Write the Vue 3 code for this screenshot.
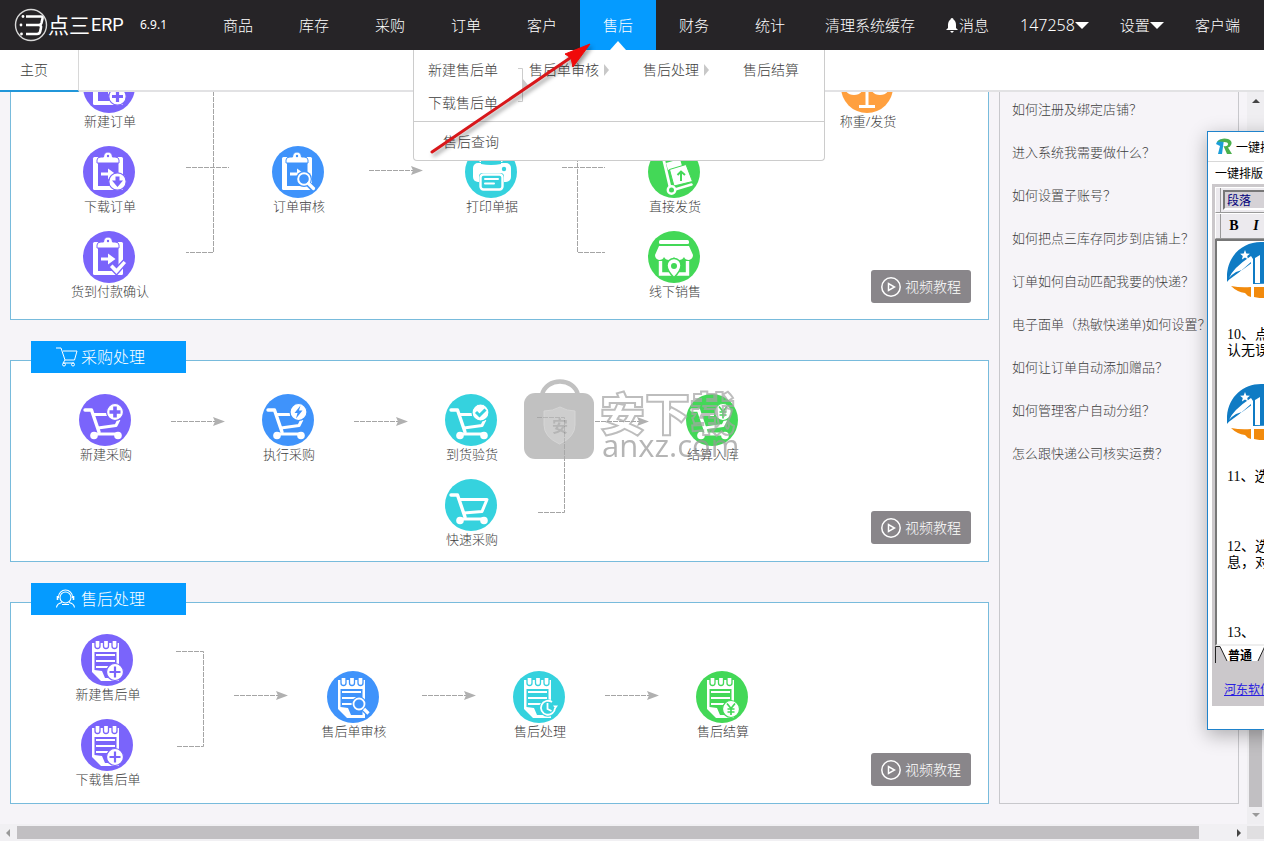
<script setup>
const mainNav = ['商品', '库存', '采购', '订单', '客户', '售后', '财务', '统计']
const active = '售后'

const panels = [
  {
    id: 'order',
    title: '',
    nodes: [
      { x: 98, y: 40, color: 'purple', icon: 'board', badge: 'plus', label: '新建订单' },
      { x: 98, y: 125, color: 'purple', icon: 'board', badge: 'down', label: '下载订单' },
      { x: 98, y: 210, color: 'purple', icon: 'board', badge: 'tick', label: '货到付款确认' },
      { x: 287, y: 125, color: 'blue', icon: 'board', badge: 'lens', label: '订单审核' },
      { x: 480, y: 125, color: 'cyan', icon: 'printer', label: '打印单据' },
      { x: 663, y: 125, color: 'green', icon: 'trolley', label: '直接发货' },
      { x: 663, y: 210, color: 'green', icon: 'store', label: '线下销售' },
      { x: 856, y: 40, color: 'orange', icon: 'scale', label: '称重/发货' }
    ],
    lines: ['M175 146.5H218', 'M202.5 70V231.5H175', 'M551 146.5H594', 'M566.5 70V231.5H594'],
    arrows: [[358, 149]]
  },
  {
    id: 'purchase',
    title: '采购处理',
    tagIcon: 'tag-cart',
    nodes: [
      { x: 94, y: 33, color: 'purple', icon: 'cart', badge: 'cart-plus', label: '新建采购' },
      { x: 277, y: 33, color: 'blue', icon: 'cart', badge: 'cart-bolt', label: '执行采购' },
      { x: 460, y: 33, color: 'cyan', icon: 'cart', badge: 'cart-ok', label: '到货验货' },
      { x: 460, y: 118, color: 'cyan', icon: 'cart-full', label: '快速采购' },
      { x: 701, y: 33, color: 'green', icon: 'cart', badge: 'cart-yen', label: '结算入库' }
    ],
    lines: ['M526 56.5H553.5V151.5H526'],
    arrows: [[160, 60], [343, 60], [584, 60]]
  },
  {
    id: 'service',
    title: '售后处理',
    tagIcon: 'tag-agent',
    nodes: [
      { x: 96, y: 31, color: 'purple', icon: 'note', badge: 'note-plus', label: '新建售后单' },
      { x: 96, y: 116, color: 'purple', icon: 'note', badge: 'note-plus', label: '下载售后单' },
      { x: 342, y: 68, color: 'blue', icon: 'note', badge: 'note-lens', label: '售后单审核' },
      { x: 528, y: 68, color: 'cyan', icon: 'note', badge: 'note-clock', label: '售后处理' },
      { x: 711, y: 68, color: 'green', icon: 'note', badge: 'note-yen', label: '售后结算' }
    ],
    lines: ['M165 48.5H192.5V143.5H165'],
    arrows: [[223, 92], [411, 92], [594, 92]]
  }
]

const help = [
  '如何注册及绑定店铺？',
  '进入系统我需要做什么？',
  '如何设置子账号？',
  '如何把点三库存同步到店铺上？',
  '订单如何自动匹配我要的快递？',
  '电子面单（热敏快递单)如何设置？',
  '如何让订单自动添加赠品？',
  '如何管理客户自动分组？',
  '怎么跟快递公司核实运费？'
]
</script>

<template>
  <div class="page">
    <svg class="defs" aria-hidden="true">
      <symbol id="board" viewBox="0 0 52 52">
        <rect x="10" y="11" width="30" height="33" rx="1.500" fill="#fff" />
        <rect x="15" y="15" width="20.500" height="25" fill="currentColor" />
        <path d="M14 17v-3q0-3 4-3h2.500q.5-5 4.500-5t4.500 5H32q4 0 4 3v3z" fill="#fff" stroke="currentColor" stroke-width="1" />
        <circle cx="25" cy="10" r="1.200" fill="currentColor" />
        <path d="M18 26.500h7v-4l7.500 5.500-7.500 5.500v-4h-7z" fill="#fff" />
      </symbol>
      <symbol id="plus" viewBox="0 0 52 52">
        <circle cx="34.500" cy="35.500" r="8.700" fill="#fff" stroke="currentColor" stroke-width="1.200" />
        <path d="M34.500 30v11M29 35.500h11" stroke="currentColor" stroke-width="3.200" />
      </symbol>
      <symbol id="down" viewBox="0 0 52 52">
        <circle cx="34.500" cy="35.500" r="8.700" fill="#fff" stroke="currentColor" stroke-width="1.200" />
        <path d="M32.500 30.500h4v4h3.500l-5.500 6.500-5.500-6.500h3.500z" fill="currentColor" />
      </symbol>
      <symbol id="tick" viewBox="0 0 52 52">
        <path d="M26 36l3.500-3.500 4 4 7-7.500 3.500 3-10.500 12z" fill="#fff" stroke="currentColor" stroke-width="1.300" />
      </symbol>
      <symbol id="lens" viewBox="0 0 52 52">
        <circle cx="32" cy="33" r="8" fill="currentColor" />
        <path d="M37 38.500l5 5" stroke="currentColor" stroke-width="6" />
        <circle cx="32" cy="33" r="5.800" fill="currentColor" stroke="#fff" stroke-width="2" />
        <path d="M36.500 37.500l5 5" stroke="#fff" stroke-width="3.200" stroke-linecap="round" />
      </symbol>
      <symbol id="printer" viewBox="0 0 52 52">
        <path d="M16 16V8h20v8" fill="none" stroke="#fff" stroke-width="3" />
        <rect x="8" y="17" width="38" height="19" rx="5" fill="#fff" />
        <path d="M16 15h20v3q-10 2-20 0z" fill="currentColor" />
        <rect x="14" y="27" width="25" height="18" rx="3.500" fill="currentColor" />
        <rect x="15.500" y="28.500" width="22" height="15" rx="3" fill="none" stroke="#fff" stroke-width="2.400" />
        <path d="M20 33h13M20 37.500h9" stroke="#fff" stroke-width="2" stroke-linecap="round" />
        <circle cx="39" cy="23" r="2.200" fill="currentColor" />
      </symbol>
      <symbol id="trolley" viewBox="0 0 52 52">
        <path d="M11 9l4 2 7 30" fill="none" stroke="#fff" stroke-width="2.800" stroke-linecap="round" />
        <path d="M18 17l14-4 2 7-14 4z" fill="#fff" />
        <path d="M21.500 23.500L38 18.500l6.500 17L26 40z" fill="#fff" stroke="currentColor" stroke-width="1" />
        <path d="M33 35v-9M29.500 29l3.500-3.500 4 3.500" fill="none" stroke="currentColor" stroke-width="2" />
        <path d="M27 43.500l16.500-5" stroke="#fff" stroke-width="2.400" stroke-linecap="round" />
        <circle cx="23.500" cy="44" r="3.700" fill="currentColor" stroke="#fff" stroke-width="2.400" />
      </symbol>
      <symbol id="store" viewBox="0 0 52 52">
        <rect x="11" y="9" width="30" height="4" rx="1.500" fill="#fff" />
        <path d="M11 15h30l4 9q0 4-4 5-4 0-5-3-1.500 3-5 3t-5-3q-1.500 3-5 3t-5-3q-1 3-5 3-4-1-4-5z" fill="#fff" />
        <path d="M12.500 30v13h27V30" fill="none" stroke="#fff" stroke-width="3.400" />
        <path d="M26 46.500q-7-7-7-12a7 7 0 0 1 14 0q0 5-7 12z" fill="#fff" stroke="currentColor" stroke-width="1.500" />
        <circle cx="26" cy="35" r="3" fill="currentColor" />
      </symbol>
      <symbol id="scale" viewBox="0 0 52 52">
        <path d="M26 9v36M18 45.500h16M10 14h32" fill="none" stroke="#fff" stroke-width="3" />
        <path d="M4 28h18q-2 6-9 6t-9-6zM30 28h18q-2 6-9 6t-9-6z" fill="#fff" />
      </symbol>
      <symbol id="cart" viewBox="0 0 52 52">
        <path d="M6 16h6.500L20 38" fill="none" stroke="#fff" stroke-width="3.400" stroke-linecap="round" stroke-linejoin="round" />
        <path d="M15 20.500h13M19 34l18-2.500 3-6" fill="none" stroke="#fff" stroke-width="3" stroke-linejoin="round" />
        <path d="M14 40h26" stroke="#fff" stroke-width="3" />
        <circle cx="15" cy="41.500" r="3.800" fill="#fff" />
        <circle cx="39" cy="41.500" r="3.800" fill="#fff" />
      </symbol>
      <symbol id="cart-full" viewBox="0 0 52 52">
        <path d="M6 16h6.500L20 38" fill="none" stroke="#fff" stroke-width="3.400" stroke-linecap="round" stroke-linejoin="round" />
        <path d="M15 20.500h27L37 32.500 19 34" fill="none" stroke="#fff" stroke-width="3" stroke-linejoin="round" />
        <path d="M14 40h26" stroke="#fff" stroke-width="3" />
        <circle cx="15" cy="41.500" r="3.800" fill="#fff" />
        <circle cx="39" cy="41.500" r="3.800" fill="#fff" />
      </symbol>
      <symbol id="cart-plus" viewBox="0 0 52 52">
        <circle cx="36" cy="18" r="8.500" fill="#fff" stroke="currentColor" stroke-width="1.200" />
        <path d="M36 12.500v11M30.500 18h11" stroke="currentColor" stroke-width="3.600" />
      </symbol>
      <symbol id="cart-bolt" viewBox="0 0 52 52">
        <circle cx="36.500" cy="18" r="8.500" fill="#fff" stroke="currentColor" stroke-width="1.200" />
        <path d="M38.500 11.500l-6 7.500h3l-1.500 5.500 6.500-8h-3.500z" fill="currentColor" />
      </symbol>
      <symbol id="cart-ok" viewBox="0 0 52 52">
        <circle cx="35.500" cy="18.500" r="8.500" fill="#fff" stroke="currentColor" stroke-width="1.200" />
        <path d="M31 18l3.500 3.500 6-6" fill="none" stroke="currentColor" stroke-width="3" />
      </symbol>
      <symbol id="cart-yen" viewBox="0 0 52 52">
        <circle cx="37" cy="18" r="8.500" fill="#fff" stroke="currentColor" stroke-width="1.200" />
        <path d="M33 12.500l4 5 4-5M37 17.500v7M33.500 18h7M33.500 21h7" fill="none" stroke="currentColor" stroke-width="1.600" />
      </symbol>
      <symbol id="note" viewBox="0 0 52 52">
        <path d="M11 9h27v38H20L11 38z" fill="#fff" />
        <path d="M13.500 18h22v26H24l-3-7-7.500-1z" fill="currentColor" />
        <path d="M15 21h19M15 27h19M15 33h19" stroke="#fff" stroke-width="2.200" />
        <path d="M14 7v5q0 2.500 2.500 2.500T19 12V7M22.500 7v5q0 2.500 2.500 2.500t2.500-2.500V7M31 7v5q0 2.500 2.500 2.500T36 12V7" fill="#fff" stroke="currentColor" stroke-width="1.300" />
      </symbol>
      <symbol id="note-plus" viewBox="0 0 52 52">
        <circle cx="34" cy="38" r="8.500" fill="#fff" stroke="currentColor" stroke-width="1.200" />
        <path d="M34 32.500v11M28.500 38h11" stroke="currentColor" stroke-width="2.200" />
      </symbol>
      <symbol id="note-lens" viewBox="0 0 52 52">
        <circle cx="32" cy="33" r="7.500" fill="currentColor" />
        <path d="M36 37l6 6" stroke="currentColor" stroke-width="6" />
        <circle cx="32" cy="33" r="5.500" fill="currentColor" stroke="#fff" stroke-width="1.800" />
        <path d="M37 38l4.500 4.500" stroke="#fff" stroke-width="3.200" />
      </symbol>
      <symbol id="note-clock" viewBox="0 0 52 52">
        <circle cx="35" cy="37" r="8.800" fill="currentColor" />
        <path d="M42 37a7 7 0 1 1-3-6" fill="none" stroke="#fff" stroke-width="1.800" />
        <path d="M40 34.500h5L42.500 38z" fill="#fff" />
        <path d="M34.500 32v6l4 2" fill="none" stroke="#fff" stroke-width="1.800" />
      </symbol>
      <symbol id="note-yen" viewBox="0 0 52 52">
        <circle cx="35" cy="38" r="8.500" fill="#fff" stroke="currentColor" stroke-width="1.200" />
        <path d="M31 32.500l4 5 4-5M35 37.500v6.500M31.500 38h7M31.500 41h7" fill="none" stroke="currentColor" stroke-width="1.700" />
      </symbol>
      <symbol id="tag-cart" viewBox="0 0 24 24">
        <path d="M0 3h5l4 12h9.500L21 6H7M9 15l-2 3h11" fill="none" stroke="#fff" stroke-width="1" />
        <circle cx="8" cy="19.500" r="1.500" fill="none" stroke="#fff" />
        <circle cx="17" cy="19.500" r="1.500" fill="none" stroke="#fff" />
      </symbol>
      <symbol id="tag-agent" viewBox="0 0 24 24">
        <circle cx="9.500" cy="10.500" r="5.500" fill="none" stroke="#fff" stroke-width="1.100" />
        <path d="M2.500 11V10a7 7 0 0 1 14 0v1" fill="none" stroke="#fff" stroke-width="1.100" />
        <path d="M1.500 9v4M17.500 9v4" stroke="#fff" stroke-width="1.600" />
        <path d="M.5 20.500q.5-4 5.500-5M13 15.500q5 1 5.500 5M6 17.500h7" fill="none" stroke="#fff" stroke-width="1.100" />
      </symbol>
      <symbol id="brand" viewBox="0 0 64 56">
        <path d="M0 40C-2 16 14 0 34 0q30 0 30 26v15L26 42V20L7 34q-6 4-7 6z" fill="#0f7bc4" />
        <path d="M2 36Q6 26 24 14l2 3v22h-2V20l-9 8v10h9v3q-14 1-17-3 0-3 8-10L9 30q-5 3-7 6z" fill="#fff" />
        <path d="M18 8l1.300 3.400 3.600.3-2.700 2.300.9 3.500-3.100-1.900-3.100 1.900.9-3.500-2.700-2.300 3.600-.3z" fill="#fff" />
        <path d="M30 15h14v26H30z" fill="#0f7bc4" />
        <path d="M28 16l5-3v28h-5z" fill="#fff" />
        <path d="M4 44q10 2 20 1v10q-4-1-6-4-8-1-14-7zM27 45h17v11q-9 1-17-1zM48 44l13-2q-4 8-13 12z" fill="#f28a0c" />
      </symbol>
    </svg>

    <header class="top">
      <a class="logo" href="#" aria-label="点三ERP">
        <svg width="34" height="34" viewBox="0 0 34 34">
          <circle cx="17" cy="17" r="15.500" fill="none" stroke="#d8d8d8" stroke-width="1.400" />
          <path d="M12 8.500h15q2 0 1.500 2L27.500 15q-.5 2-3 2H12M25 17q2.500.5 2 2.500l-.8 4Q25.700 26 23 26H12" fill="none" stroke="#fff" stroke-width="2.600" />
          <circle cx="9" cy="8.500" r="1.400" fill="#fff" />
          <circle cx="7" cy="17" r="1.400" fill="#fff" />
          <circle cx="7.500" cy="26" r="1.400" fill="#fff" />
        </svg>
        <span class="brand-cn">点三</span><span class="brand-en">ERP</span>
      </a>
      <span class="version">6.9.1</span>
      <nav class="nav">
        <div v-for="item in mainNav" :key="item" class="cell" :class="{ on: item === active }">
          <a href="#">{{ item }}</a>
          <div v-if="item === active" class="menu">
            <div class="flow">
              <div class="col">
                <a href="#">新建售后单</a>
                <a href="#">下载售后单</a>
              </div>
              <svg class="join" width="10" height="34" viewBox="0 0 10 34">
                <path d="M0 .5H4.500V33.500H0" fill="none" stroke="#ccc" />
                <path d="M5 11l5 6-5 6z" fill="#ccc" />
              </svg>
              <a href="#" class="step">售后单审核</a>
              <i class="tri"></i>
              <a href="#" class="step mid">售后处理</a>
              <i class="tri"></i>
              <a href="#" class="step mid">售后结算</a>
            </div>
            <div class="query"><a href="#">售后查询</a></div>
          </div>
        </div>
      </nav>
      <nav class="tools">
        <a href="#">清理系统缓存</a>
        <a href="#">
          <svg class="bell" width="12" height="15" viewBox="0 0 12 15"><path d="M6 0q1.500 0 1.500 1.500Q10 3 10 7v3l2 2H0l2-2V7q0-4 2.500-5.500Q4.500 0 6 0zM4 13h4l-2 2z" fill="#fff" /></svg>
          <span>消息</span>
        </a>
        <a href="#"><span class="num">147258</span><i class="caret"></i></a>
        <a href="#"><span>设置</span><i class="caret"></i></a>
        <a href="#">客户端</a>
      </nav>
    </header>

    <div class="tabs"><button type="button" class="tab">主页</button></div>

    <div class="body">
      <main class="panels">
        <section v-for="p in panels" :key="p.id" class="panel" :class="p.id">
          <h2 v-if="p.title" class="tag">
            <svg width="24" height="24"><use :href="'#' + p.tagIcon" /></svg>
            <span>{{ p.title }}</span>
          </h2>
          <svg class="links" aria-hidden="true">
            <path v-for="d in p.lines" :key="d" :d="d" fill="none" stroke="#a5a5a5" stroke-dasharray="5 1" />
            <g v-for="(a, i) in p.arrows" :key="i" :transform="`translate(${a[0]} ${a[1]})`">
              <path d="M0 .5H44" fill="none" stroke="#a5a5a5" stroke-dasharray="5 1" />
              <path d="M42-4L54 .5 42 5l2-4.500z" fill="#b0b0b0" />
            </g>
          </svg>
          <a v-for="(n, i) in p.nodes" :key="i" href="#" class="node" :style="{ left: n.x + 'px', top: n.y + 'px' }">
            <svg width="52" height="52" viewBox="0 0 52 52" :class="n.color">
              <circle cx="26" cy="26" r="26" fill="currentColor" />
              <use :href="'#' + n.icon" />
              <use v-if="n.badge" :href="'#' + n.badge" />
            </svg>
            <span>{{ n.label }}</span>
          </a>
          <div v-if="p.id === 'purchase'" class="mark">
            <svg width="70" height="80" viewBox="0 0 70 80">
              <path d="M18 16C22-2 50-2 54 16" fill="none" stroke="#aaa" stroke-width="4.500" />
              <rect y="14" width="70" height="66" rx="11" fill="#aaa" />
              <path d="M20 32q9 0 16-4 7 4 15 4v14q0 12-15.500 19Q20 58 20 46z" fill="#bcbcbc" stroke="#c6c6c6" />
            </svg>
            <span class="seal">安</span>
            <div class="words"><span class="cn">安下载</span><span class="en">anxz.com</span></div>
          </div>
          <button type="button" class="video">
            <svg width="20" height="20" viewBox="0 0 20 20" fill="none" stroke="#fff" stroke-width="1.500">
              <circle cx="10" cy="10" r="9.200" /><path d="M7.500 6.500v7l6-3.500z" />
            </svg>
            <span>视频教程</span>
          </button>
        </section>
      </main>
      <aside class="help">
        <ul>
          <li v-for="h in help" :key="h"><a href="#">{{ h }}</a></li>
        </ul>
      </aside>
      <div class="vbar"><i class="up"></i><div class="vthumb"></div><i class="dn"></i></div>
    </div>
    <div class="hbar"><i class="lt"></i><div class="htrack"><div class="hthumb"></div></div><i class="rt"></i><div class="corner"></div></div>

    <svg class="pointer" width="176" height="124" viewBox="0 0 176 124" aria-hidden="true">
      <path d="M8 115L149 19" stroke="#d8171a" stroke-width="3" stroke-linecap="round" />
      <path d="M166 7L141 17l6 4 2 9z" fill="#f00a0a" stroke="#f00a0a" />
    </svg>

    <div class="win">
      <div class="title">
        <svg width="18" height="17" viewBox="0 0 18 17">
          <path d="M1 6Q3 0 9 1.500L7 16H3l2-8z" fill="#1b9ed8" />
          <path d="M2 4Q7-1 13 1q5 2 3 6-1 2-3 2.500L17 16h-5L8.500 8q4 1 4.500-1.500T9 4Q5 3 2 4z" fill="#4bb04c" />
        </svg>
        <span>一键排版</span>
      </div>
      <div class="bar">一键排版</div>
      <div class="frame">
        <div class="tool"><div class="combo">段落</div></div>
        <div class="tool"><button type="button" class="fmt">B</button><button type="button" class="fmt it">I</button></div>
        <div class="doc">
          <svg width="64" height="56"><use href="#brand" /></svg>
          <p class="a">10、点<br />认无误</p>
          <svg width="64" height="56"><use href="#brand" /></svg>
          <p class="b">11、选</p>
          <p class="c">12、选<br />息，对</p>
          <p class="c">13、</p>
        </div>
        <div class="sheet">
          <svg width="60" height="17" viewBox="0 0 60 17"><path d="M5 0l7 15h31L50 0z" fill="#fff" /><path d="M.5 17V.5H5L12 15M43 15L50 0" fill="none" stroke="#222" /></svg>
          <b>普通</b>
        </div>
        <a class="link" href="#">河东软件</a>
      </div>
    </div>
  </div>
</template>

<style>
body { margin: 0; background: #f6f4f8; }
</style>

<style scoped>
* { box-sizing: border-box; }
.page { position: relative; display: flex; flex-direction: column; height: 100vh; overflow: hidden; background: #f6f4f8; color: #3c3c3c; font: 300 13px/16px "Noto Sans", "Noto Sans CJK SC", sans-serif; }
a { color: inherit; text-decoration: none; }
button { font: inherit; color: inherit; border: 0; background: none; padding: 0; }
.defs { position: absolute; width: 0; height: 0; }

.top { position: relative; z-index: 5; flex: none; display: flex; align-items: center; height: 50px; background: #262427; color: #fff; font-size: 15px; line-height: 50px; white-space: nowrap; }
.logo { display: flex; align-items: center; width: 126px; margin-left: 14px; }
.logo svg { flex: none; }
.brand-cn { font-size: 21px; font-weight: 400; }
.brand-en { margin-left: 1px; font: 400 18px/46px Roboto, sans-serif; }
.version { width: 60px; font-size: 12px; font-weight: 400; line-height: 48px; }
.nav { display: flex; }
.cell { position: relative; width: 76px; height: 50px; text-align: center; }
.cell > a { display: block; }
.cell.on { background: #059bff; }
.cell.on::after { content: ""; position: absolute; left: 30px; bottom: 0; border: 8px solid transparent; border-top: 0; border-bottom: 9px solid #fff; }
.tools { display: flex; gap: 31px; margin-left: 17px; }
.tools a { display: flex; align-items: center; height: 50px; }
.bell { margin-right: 1px; }
.num { font-size: 16px; }
.caret { border: 7px solid transparent; border-bottom: 0; border-top-color: #fff; }

.menu { position: absolute; left: -167px; top: 50px; width: 412px; border: 1px solid #ccc; border-top: 0; border-radius: 0 0 4px 4px; background: #fff; color: #3c3c3c; font-size: 14px; line-height: 20px; text-align: left; }
.flow { display: flex; height: 72px; padding: 10px 0 0 14px; border-bottom: 1px solid #ccc; }
.col { display: flex; flex-direction: column; gap: 13px; }
.join { flex: none; margin: 8px 0 0 20px; }
.step { margin-left: 1px; }
.step.mid { margin-left: 34px; }
.tri { height: 12px; margin: 4px 0 0 5px; border: 6px solid transparent; border-right: 0; border-left: 5px solid #c8c8c8; }
.query { padding: 10px 0 8px 29px; }

.tabs { flex: none; display: flex; height: 42px; background: #fff; border-bottom: 2px solid #e2e2e4; }
.tab { width: 79px; height: 42px; padding-right: 10px; border-right: 1px solid #d8d8d8; border-bottom: 2px solid #2196d9; font-size: 14px; }

.body { flex: 1; min-height: 0; display: flex; padding-left: 10px; overflow: hidden; }
.panels { flex: 1; display: flex; flex-direction: column; gap: 40px; min-width: 0; }
.panel { position: relative; flex: none; height: 202px; border: 1px solid #78bbdc; background: #fff; }
.panel.order { height: 300px; margin-top: -72px; }
.tag { position: absolute; left: 20px; top: -20px; display: flex; align-items: center; gap: 1px; width: 155px; height: 32px; margin: 0; padding-left: 25px; background: #059bff; color: #fff; font-size: 16px; font-weight: 300; }
.links { position: absolute; left: 0; top: 0; width: 100%; height: 100%; }
.node { position: absolute; display: flex; flex-direction: column; align-items: center; width: 90px; margin-left: -45px; white-space: nowrap; }
.node span { padding-left: 2px; }
.purple { color: #7a64fb; }
.blue { color: #3f93fb; }
.cyan { color: #35d2de; }
.green { color: #43d857; }
.orange { color: #ffa03f; }
.video { position: absolute; right: 17px; bottom: 17px; display: flex; align-items: center; gap: 4px; height: 33px; padding: 0 10px; border-radius: 3px; background: #89868a; color: #fff; font-size: 14px; }
.order .video { bottom: 16px; }

.mark { position: absolute; left: 513px; top: 18px; display: flex; opacity: .72; pointer-events: none; }
.seal { position: absolute; left: 28px; top: 39px; color: #999; font-size: 16px; font-weight: 700; }
.words { display: flex; flex-direction: column; margin-left: 6px; }
.words .cn { height: 48px; padding-top: 12px; font-size: 45px; font-weight: 900; line-height: 45px; color: transparent; -webkit-text-stroke: 2px #a5a5a5; }
.words .en { padding-left: 2px; font: 400 31px/36px "Open Sans", sans-serif; color: #999; }

.help { flex: none; width: 240px; margin: 0 8px 20px 10px; border: 1px solid #c8c8cc; border-top: 0; }
.help ul { display: flex; flex-direction: column; gap: 23px; margin: 0; padding: 7px 0 0 12px; list-style: none; line-height: 20px; white-space: nowrap; }

.vbar { flex: none; display: flex; flex-direction: column; align-items: center; width: 17px; background: #efeef1; }
.up, .dn, .lt, .rt { flex: none; border: 4px solid transparent; }
.up { margin-top: 7px; border-top: 0; border-bottom-color: #444; }
.dn { margin: 6px 0 7px; border-bottom: 0; border-top-color: #999; }
.vthumb { width: 13px; flex: 1; margin-top: 300px; background: #c1bfc2; }
.hbar { flex: none; display: flex; align-items: center; height: 17px; background: #f1f0f3; }
.lt { margin: 0 7px 0 6px; border-left: 0; border-right-color: #999; }
.rt { margin: 0 6px 0 7px; border-right: 0; border-left-color: #444; }
.htrack { flex: 1; }
.hthumb { width: calc(100% - 31px); height: 13px; background: #c1bfc2; }
.corner { width: 17px; height: 13px; background: #e0dfe1; }

.pointer { position: absolute; left: 424px; top: 37px; z-index: 8; filter: drop-shadow(2px 3px 2px rgba(0, 0, 0, .4)); pointer-events: none; }

.win { position: absolute; right: -343px; top: 131px; z-index: 9; width: 400px; height: 599px; border: 1px solid #1f83cc; background: #fff; box-shadow: 0 5px 18px rgba(0, 0, 0, .3); color: #000; font: 400 12px/16px "Noto Sans CJK SC", sans-serif; white-space: nowrap; }
.title { display: flex; align-items: center; gap: 3px; height: 30px; padding-left: 7px; border-bottom: 1px solid #d8d8d8; }
.bar { height: 22px; padding: 3px 0 0 7px; }
.frame { height: 522px; margin-left: 4px; padding: 3px 0 0 3px; background: #cbc8cb; }
.tool { display: flex; align-items: center; height: 26px; padding-left: 7px; background: #eceaee; border: 1px solid #fff; border-bottom-color: #999; box-shadow: inset 4px 0 0 #eceaee, inset 5px 0 0 #999; }
.combo { width: 120px; height: 20px; padding-left: 2px; border: 2px solid #777; border-right-color: #fff; border-bottom-color: #fff; background: #d5d2d6; color: #00007c; line-height: 15px; }
.fmt { width: 22px; font: 700 14px/20px "Liberation Serif", serif; }
.fmt.it { font-style: italic; }
.doc { height: 407px; padding: 1px 0 0 10px; overflow: hidden; border-left: 2px solid #777; border-top: 2px solid #777; border-bottom: 2px solid #eee; background: #fff; font: 400 14px/16px "Liberation Serif", "Noto Sans CJK SC", serif; }
.doc svg { display: block; }
.doc p { margin: 0; }
.doc .a { margin: 29px 0 25px; }
.doc .b { margin-top: 29px; }
.doc .c { margin-top: 54px; }
.sheet { position: relative; height: 20px; }
.sheet b { position: absolute; left: 13px; top: 1px; }
.link { display: inline-block; margin: 15px 0 0 9px; color: #2a20e0; text-decoration: underline; }
</style>
